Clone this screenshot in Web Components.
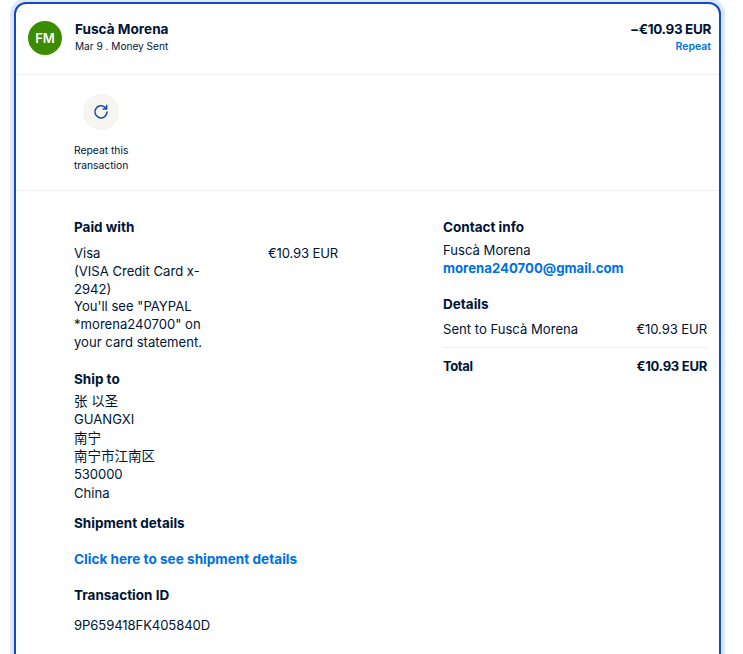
<!DOCTYPE html>
<html>
<head>
<meta charset="utf-8">
<style>
  html, body { margin: 0; padding: 0; background: #fff; height: 654px; overflow: hidden; }
  body { font-family: Inter, "Noto Sans CJK SC", sans-serif; color: #001435; }
  .cjk { font-size: 13.5px; }
  .num { letter-spacing: -0.1px; }
</style>
</head>
<body>
<txn-card>
  <txn-header slot="header" initials="FM" name="Fuscà Morena" sub="Mar 9 . Money Sent" amount="−€10.93 EUR" action="Repeat"></txn-header>
  <txn-action slot="actions">Repeat this<br>transaction</txn-action>
  <div slot="left">
    <txn-section heading="Paid with" style="--gap:9px">
      <txn-paid amount="€10.93 EUR">Visa<br>(VISA Credit Card x-2942)<br>You'll see "PAYPAL *morena240700" on your card statement.</txn-paid>
    </txn-section>
    <txn-section heading="Ship to" style="--top:18px;--gap:4px;--line:18.4px"><span class="cjk">张 以圣</span><br>GUANGXI<br><span class="cjk">南宁</span><br><span class="cjk">南宁市江南区</span><br><span class="num">530000</span><br>China</txn-section>
    <txn-section heading="Shipment details" style="--top:12px;--gap:19px"><txn-link style="font-size:13.6px">Click here to see shipment details</txn-link></txn-section>
    <txn-section heading="Transaction ID" style="--top:17px;--gap:13px"><span class="num">9P659418FK405840D</span></txn-section>
  </div>
  <div slot="right">
    <txn-section heading="Contact info" style="--gap:6px">Fuscà Morena<br><txn-link style="font-size:13.2px">morena240700@gmail.com</txn-link></txn-section>
    <txn-section heading="Details" style="--top:17px;--gap:8px">
      <txn-row label="Sent to Fuscà Morena" value="€10.93 EUR"></txn-row>
      <txn-row total label="Total" value="€10.93 EUR"></txn-row>
    </txn-section>
  </div>
</txn-card>

<script>
(global => {
  'use strict';

  class TxnCard extends HTMLElement {
    constructor() {
      super();
      const shadowRoot = this.attachShadow({ mode: 'open' });
      shadowRoot.innerHTML = `
  <style>
  :host {
    display: block;
    box-sizing: border-box;
    width: 707px;
    height: 720px;
    margin: 2px 0 0 14px;
    border: 2px solid #1546c8;
    border-radius: 12px;
    box-shadow: 0 0 0 4px #dbe8fd;
    background-color: #fff;
  }
  .actions {
    border-top: 1px solid #eeeeec;
    border-bottom: 1px solid #eeeeec;
    height: 115px;
    box-sizing: content-box;
    padding-left: 58px;
  }
  .body {
    display: grid;
    grid-template-columns: 369px 264px;
    padding: 27px 0 0 58px;
  }
  </style>
  <slot name="header"></slot>
  <div class="actions"><slot name="actions"></slot></div>
  <div class="body">
    <div><slot name="left"></slot></div>
    <div><slot name="right"></slot></div>
  </div>
  `;
    }
  }

  class TxnHeader extends HTMLElement {
    constructor() {
      super();
      const shadowRoot = this.attachShadow({ mode: 'open' });
      shadowRoot.innerHTML = `
  <style>
  :host {
    display: flex;
    align-items: flex-start;
    height: 70px;
    box-sizing: border-box;
    padding: 17px 8px 0 12px;
  }
  .avatar {
    width: 34px;
    height: 34px;
    border-radius: 50%;
    background-color: #3b8c00;
    color: #fff;
    font-size: 13px;
    font-weight: 600;
    line-height: 34px;
    text-align: center;
    margin-right: 13px;
    flex: none;
  }
  .main { flex: 1; }
  .name { font-size: 13.6px; font-weight: 700; line-height: 18px; margin-top: -1px; }
  .sub { font-size: 10.1px; line-height: 15px; margin-top: 1px; }
  .side { text-align: right; }
  .amount { font-size: 13.5px; font-weight: 700; line-height: 18px; margin-top: -1px; letter-spacing: -0.35px; }
  .action { font-size: 10.5px; font-weight: 600; line-height: 15px; margin-top: 1px; color: #0070e0; }
  </style>
  <div class="avatar"></div>
  <div class="main"><div class="name"></div><div class="sub"></div></div>
  <div class="side"><div class="amount"></div><div class="action"></div></div>
  `;
      shadowRoot.querySelector('.avatar').textContent = this.getAttribute('initials');
      shadowRoot.querySelector('.name').textContent = this.getAttribute('name');
      shadowRoot.querySelector('.sub').textContent = this.getAttribute('sub');
      shadowRoot.querySelector('.amount').textContent = this.getAttribute('amount');
      shadowRoot.querySelector('.action').textContent = this.getAttribute('action');
    }
  }

  class TxnAction extends HTMLElement {
    constructor() {
      super();
      const shadowRoot = this.attachShadow({ mode: 'open' });
      shadowRoot.innerHTML = `
  <style>
  :host {
    display: inline-flex;
    flex-direction: column;
    align-items: center;
    padding-top: 19px;
  }
  .circle {
    width: 36px;
    height: 36px;
    border-radius: 50%;
    background-color: #f6f5f1;
    display: flex;
    align-items: center;
    justify-content: center;
    margin-bottom: 13px;
  }
  .label { font-size: 10.3px; line-height: 15px; }
  </style>
  <div class="circle">
    <svg width="16" height="16" viewBox="0 0 16 16" fill="none" stroke="#1546a0" stroke-width="1.5" stroke-linecap="round" stroke-linejoin="round">
      <path d="M13.2 4.6A6.1 6.1 0 1 0 14.1 8"/>
      <path d="M13.6 1.4v3.5h-3.5"/>
    </svg>
  </div>
  <div class="label"><slot></slot></div>
  `;
    }
  }

  class TxnSection extends HTMLElement {
    constructor() {
      super();
      const shadowRoot = this.attachShadow({ mode: 'open' });
      shadowRoot.innerHTML = `
  <style>
  :host {
    display: block;
    margin-top: var(--top, 0);
    font-size: 13.1px;
    line-height: var(--line, 17.8px);
  }
  h3 {
    margin: 0 0 var(--gap, 6px);
    font-size: 13.5px;
    font-weight: 700;
    line-height: 18px;
  }
  </style>
  <h3></h3>
  <slot></slot>
  `;
      shadowRoot.querySelector('h3').textContent = this.getAttribute('heading');
    }
  }

  class TxnPaid extends HTMLElement {
    constructor() {
      super();
      const shadowRoot = this.attachShadow({ mode: 'open' });
      shadowRoot.innerHTML = `
  <style>
  :host { display: flex; align-items: flex-start; }
  .info { width: 140px; margin-right: 54px; }
  .amount { letter-spacing: -0.15px; }
  </style>
  <div class="info"><slot></slot></div>
  <div class="amount"></div>
  `;
      shadowRoot.querySelector('.amount').textContent = this.getAttribute('amount');
    }
  }

  class TxnLink extends HTMLElement {
    constructor() {
      super();
      const shadowRoot = this.attachShadow({ mode: 'open' });
      shadowRoot.innerHTML = `
  <style>
  :host { color: #0070e0; font-weight: 700; }
  </style>
  <slot></slot>
  `;
    }
  }

  class TxnRow extends HTMLElement {
    constructor() {
      super();
      const shadowRoot = this.attachShadow({ mode: 'open' });
      shadowRoot.innerHTML = `
  <style>
  :host {
    display: flex;
    justify-content: space-between;
    padding-bottom: 9px;
  }
  span:last-child { letter-spacing: -0.1px; }
  :host([total]) {
    border-top: 1px solid #eeeeec;
    padding-top: 10px;
    font-size: 13px;
    font-weight: 700;
    letter-spacing: -0.4px;
  }
  :host([total]) span:last-child { letter-spacing: -0.25px; }
  </style>
  <span></span><span></span>
  `;
      const spans = shadowRoot.querySelectorAll('span');
      spans[0].textContent = this.getAttribute('label');
      spans[1].textContent = this.getAttribute('value');
    }
  }

  customElements.define('txn-card', TxnCard);
  customElements.define('txn-header', TxnHeader);
  customElements.define('txn-action', TxnAction);
  customElements.define('txn-section', TxnSection);
  customElements.define('txn-paid', TxnPaid);
  customElements.define('txn-link', TxnLink);
  customElements.define('txn-row', TxnRow);
})(this);
</script>
</body>
</html>
